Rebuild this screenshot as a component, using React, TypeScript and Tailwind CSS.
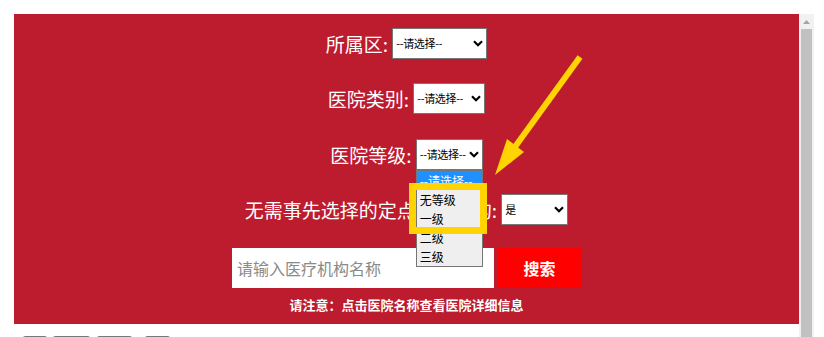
import React from "react";

const font = { fontFamily: '"Noto Sans CJK SC", "Noto Sans", sans-serif' };

function Chevron() {
  return (
    <svg width="10" height="7" viewBox="0 0 10 7" className="shrink-0">
      <path d="M1 1.2 L5 5.2 L9 1.2" fill="none" stroke="#000" strokeWidth="2.2" />
    </svg>
  );
}

function FakeSelect({ w, text }: { w: string; text: string }) {
  return (
    <div
      className={`${w} h-[31px] bg-white border border-[#767676] flex items-center justify-between pl-[3px] pr-[3px] text-[11px] text-black`}
    >
      <span className="whitespace-nowrap overflow-hidden tracking-[-0.3px]">{text}</span>
      <Chevron />
    </div>
  );
}

export default function App() {
  return (
    <div className="h-[337px] overflow-hidden bg-white flex pt-[14px] pl-[14px]" style={font}>
      <div className="w-[785px] flex flex-col">
        <div className="relative bg-[#bd1b2e] flex flex-col items-center pt-[14px] pb-[10px] text-white">
          <div className="flex items-center h-[31px]">
            <span className="text-[19px] leading-none mr-[4px]">所属区:</span>
            <FakeSelect w="w-[95px]" text="--请选择--" />
          </div>
          <div className="flex items-center h-[31px] mt-[24px]">
            <span className="text-[19px] leading-none mr-[4px]">医院类别:</span>
            <FakeSelect w="w-[72px]" text="--请选择--" />
          </div>
          <div className="flex items-center h-[31px] mt-[25px]">
            <span className="text-[19px] leading-none mr-[4px]">医院等级:</span>
            <div className="relative z-20">
              <FakeSelect w="w-[67px]" text="--请选择--" />
              <div className="absolute left-0 top-[31px] w-[67px] bg-[#efefef] border border-[#767676] text-[12px] text-black leading-[19px]">
                <div className="bg-[#1e90ff] text-white pl-[3px] h-[19px] whitespace-nowrap overflow-hidden">--请选择--</div>
                <div className="pl-[3px] h-[19px]">无等级</div>
                <div className="pl-[3px] h-[19px]">一级</div>
                <div className="pl-[3px] h-[19px]">二级</div>
                <div className="pl-[3px] h-[19px]">三级</div>
              </div>
              <div className="absolute left-[-7px] top-[44px] w-[78px] h-[51px] border-[7px] border-[#ffd400]" />
            </div>
          </div>
          <div className="flex items-center h-[31px] mt-[24px]">
            <span className="text-[19px] leading-none mr-[4px]">无需事先选择的定点医疗机构:</span>
            <FakeSelect w="w-[67px]" text="是" />
          </div>
          <div className="flex items-center mt-[23px] gap-[4px]">
            <div className="w-[262px] h-[40px] bg-white flex items-center pl-[5px] text-[16px] text-[#8a8a8a]">
              请输入医疗机构名称
            </div>
            <div className="w-[83px] h-[40px] bg-[#ff0000] flex items-center justify-center text-[16px] font-bold text-white">
              搜索
            </div>
          </div>
          <div className="mt-[8px] text-[13px] leading-[18px] font-bold text-white">
            请注意：点击医院名称查看医院详细信息
          </div>
          <svg
            className="absolute left-0 top-0 z-30 pointer-events-none"
            width="785"
            height="310"
            viewBox="14 14 785 310"
          >
            <line x1="580" y1="57" x2="512" y2="151" stroke="#ffd400" strokeWidth="6" />
            <polygon points="495,175 507,139 524,152" fill="#ffd400" />
          </svg>
        </div>
        <div className="flex mt-[12px] pl-[8px]">
          <div className="w-[26px] h-[20px] border-t-2 border-[#777] rounded-t-sm" />
          <div className="w-[39px] h-[20px] border-t-2 border-[#777] ml-[4px] rounded-t-sm" />
          <div className="w-[37px] h-[20px] border-t-2 border-[#777] ml-[5px] rounded-t-sm" />
          <div className="w-[27px] h-[20px] border-t-2 border-[#777] ml-[11px] rounded-t-sm" />
        </div>
      </div>
      <div className="w-[15px] bg-[#f1f1f1] flex flex-col items-center">
        <div className="h-[15px] flex items-center justify-center">
          <svg width="7" height="4" viewBox="0 0 7 4">
            <polygon points="0,4 3.5,0 7,4" fill="#a3a3a3" />
          </svg>
        </div>
        <div className="w-[11px] flex-1 bg-[#c1c1c1]" />
      </div>
    </div>
  );
}
